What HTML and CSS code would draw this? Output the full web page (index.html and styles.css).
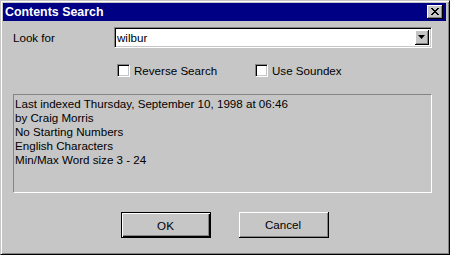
FILE: index.html
```html
<!DOCTYPE html>
<html>
<head>
<meta charset="utf-8">
<link rel="stylesheet" href="styles.css">
</head>
<body>
<div class="window">
  <div class="titlebar">
    <span class="title">Contents Search</span>
    <span class="close"><svg width="8" height="7" viewBox="0 0 8 7"><path d="M0 0h2v1h1v1h2v-1h1v-1h2v1h-1v1h-1v1h-1v1h1v1h1v1h1v1h-2v-1h-1v-1h-2v1h-1v1h-2v-1h1v-1h1v-1h1v-1h-1v-1h-1v-1h-1z" fill="#000"/></svg></span>
  </div>
  <div class="content">
    <div class="row-look">
      <span class="label">Look for</span>
      <div class="combo">
        <span class="combo-text">wilbur</span>
        <span class="combo-btn"><svg width="7" height="4" viewBox="0 0 7 4"><path d="M0 0h7l-3.5 4z" fill="#000"/></svg></span>
      </div>
    </div>
    <div class="row-checks">
      <label class="check check-rev"><span class="box"></span>Reverse Search</label>
      <label class="check check-snd"><span class="box"></span>Use Soundex</label>
    </div>
    <div class="info">
      <div>Last indexed Thursday, September 10, 1998 at 06:46</div>
      <div>by Craig Morris</div>
      <div>No Starting Numbers</div>
      <div>English Characters</div>
      <div>Min/Max Word size 3 - 24</div>
    </div>
    <div class="buttons">
      <div class="btn default"><span>OK</span></div>
      <div class="btn"><span>Cancel</span></div>
    </div>
  </div>
</div>
</body>
</html>
```
FILE: styles.css
```css
* { box-sizing: border-box; }
html, body { margin: 0; padding: 0; }
body {
  width: 450px;
  height: 255px;
  background: #c6c6c6;
  font-family: "Liberation Sans", Arial, sans-serif;
  font-size: 11.6px;
  color: #000;
  overflow: hidden;
}
.window {
  width: 450px;
  height: 255px;
  background: #c6c6c6;
  border-top: 1px solid #c6c6c6;
  border-left: 1px solid #c6c6c6;
  border-right: 1px solid #000;
  border-bottom: 1px solid #000;
  box-shadow: inset 1px 1px 0 #fff, inset -1px -1px 0 #848484;
  padding: 2px 3px 3px 2px;
  display: flex;
  flex-direction: column;
}
.titlebar {
  height: 18px;
  background: #000084;
  display: flex;
  align-items: center;
  justify-content: space-between;
  padding: 0 3px 0 2px;
}
.title {
  color: #fff;
  font-weight: bold;
  font-size: 12.4px;
}
.close {
  width: 16px;
  height: 14px;
  background: #c6c6c6;
  border-right: 1px solid #000;
  border-bottom: 1px solid #000;
  box-shadow: inset 1px 1px 0 #fff, inset -1px -1px 0 #848484;
  display: flex;
  align-items: center;
  justify-content: center;
}
.content {
  flex: 1;
  display: flex;
  flex-direction: column;
  padding: 5px 14px 0 10px;
}
.row-look {
  display: flex;
  align-items: center;
  height: 22px;
}
.label {
  width: 101px;
}
.combo {
  flex: 1;
  height: 21px;
  background: #fff;
  border-top: 1px solid #848484;
  border-left: 1px solid #848484;
  border-right: 1px solid #fff;
  border-bottom: 1px solid #fff;
  box-shadow: inset 1px 1px 0 #000, inset -1px -1px 0 #c6c6c6;
  display: flex;
  align-items: center;
  padding: 2px;
}
.combo-text {
  flex: 1;
  padding-left: 0;
}
.combo-btn {
  width: 14px;
  height: 15px;
  background: #c6c6c6;
  border-right: 1px solid #000;
  border-bottom: 1px solid #000;
  box-shadow: inset 1px 1px 0 #fff, inset -1px -1px 0 #848484;
  display: flex;
  align-items: center;
  justify-content: center;
}
.row-checks {
  display: flex;
  align-items: center;
  height: 24px;
  margin-top: 10px;
}
.check {
  display: flex;
  align-items: center;
}
.check-rev { margin-left: 104px; width: 138px; }
.box {
  width: 13px;
  height: 13px;
  background: #fff;
  border-top: 1px solid #848484;
  border-left: 1px solid #848484;
  border-right: 1px solid #fff;
  border-bottom: 1px solid #fff;
  box-shadow: inset 1px 1px 0 #000, inset -1px -1px 0 #c6c6c6;
  margin-right: 4px;
}
.info {
  margin-top: 12px;
  height: 99px;
  border-top: 1px solid #848484;
  border-left: 1px solid #848484;
  border-right: 1px solid #fff;
  border-bottom: 1px solid #fff;
  padding: 2px 0 0 1px;
  line-height: 14px;
}
.buttons {
  display: flex;
  justify-content: center;
  gap: 28px;
  margin-top: 19px;
  padding-left: 4px;
}
.btn {
  width: 90px;
  height: 26px;
  background: #c6c6c6;
  border-right: 1px solid #000;
  border-bottom: 1px solid #000;
  box-shadow: inset 1px 1px 0 #fff, inset -1px -1px 0 #848484;
  display: flex;
  align-items: center;
  justify-content: center;
}
.btn.default {
  border: 1px solid #000;
  box-shadow: inset 1px 1px 0 #fff, inset -1px -1px 0 #000, inset -2px -2px 0 #848484;
}
```
